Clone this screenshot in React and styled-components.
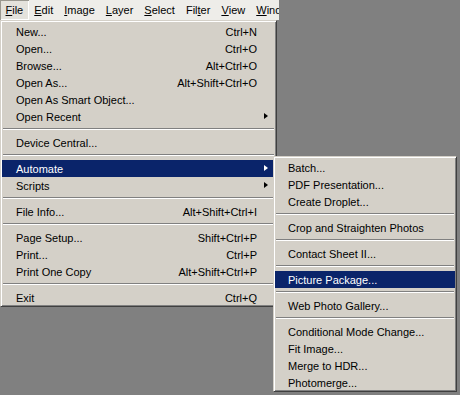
import React from 'react';
import styled, { createGlobalStyle, css } from 'styled-components';

const Global = createGlobalStyle`
  html, body { margin: 0; padding: 0; background: #808080; }
  body {
    width: 460px; height: 395px; overflow: hidden;
    font-family: "Liberation Sans", Arial, sans-serif;
    font-size: 11px; color: #000;
  }
`;

const Screen = styled.div`
  position: relative;
  width: 460px;
  height: 395px;
`;

const MenuBar = styled.div`
  display: flex;
  width: 279px;
  height: 20px;
  background: #eeede9;
  overflow: hidden;
  white-space: nowrap;
`;

const BarItem = styled.div`
  display: flex;
  align-items: center;
  padding: 0 5.5px;
  ${p => p.$open && css`
    background: #e4e2dc;
    box-shadow: inset 1px 1px #9a9890, inset -1px -1px #ffffff;
  `}
`;

const U = styled.span`
  text-decoration: underline;
  text-underline-offset: 1px;
`;

const Menu = styled.div`
  position: absolute;
  box-sizing: border-box;
  background: #d4d0c8;
  border: 1px solid;
  border-color: #d4d0c8 #404040 #404040 #d4d0c8;
  box-shadow: inset 1px 1px #ffffff, inset -1px -1px #808080;
  padding: 2px 1px 0 1px;
  color: #000;
  white-space: nowrap;
  ${p => p.$sub
    ? css`left: calc(100% - 2px); top: -4px; width: 184px;`
    : css`left: 0; top: 20px; width: 277px;`}
`;

const Row = styled.div`
  position: relative;
  box-sizing: border-box;
  display: flex;
  align-items: center;
  justify-content: space-between;
  height: 17px;
  padding: ${p => (p.$sub ? '1px 18px 0 13px' : '1px 18px 0 14px')};
  ${p => p.$active && css`
    background: #0a246a;
    color: #ffffff;
  `}
`;

const Shortcut = styled.span`
  margin-left: 20px;
`;

const Arrow = styled.span`
  position: absolute;
  right: 7px;
  top: 5px;
  width: 0;
  height: 0;
  border-left: 4px solid currentColor;
  border-top: 3.5px solid transparent;
  border-bottom: 3.5px solid transparent;
`;

const Sep = styled.div`
  height: 0;
  margin: 3px 1px 4px;
  border-top: 1px solid #808080;
  border-bottom: 1px solid #ffffff;
`;

const barItems = [
  { pre: '', u: 'F', post: 'ile', open: true },
  { pre: '', u: 'E', post: 'dit' },
  { pre: '', u: 'I', post: 'mage' },
  { pre: '', u: 'L', post: 'ayer' },
  { pre: '', u: 'S', post: 'elect' },
  { pre: 'Fil', u: 't', post: 'er' },
  { pre: '', u: 'V', post: 'iew' },
  { pre: '', u: 'W', post: 'ind' },
];

const subItems = [
  { label: 'Batch...' },
  { label: 'PDF Presentation...' },
  { label: 'Create Droplet...' },
  { sep: true },
  { label: 'Crop and Straighten Photos' },
  { sep: true },
  { label: 'Contact Sheet II...' },
  { sep: true },
  { label: 'Picture Package...', active: true },
  { sep: true },
  { label: 'Web Photo Gallery...' },
  { sep: true },
  { label: 'Conditional Mode Change...' },
  { label: 'Fit Image...' },
  { label: 'Merge to HDR...' },
  { label: 'Photomerge...' },
];

const fileItems = [
  { label: 'New...', key: 'Ctrl+N' },
  { label: 'Open...', key: 'Ctrl+O' },
  { label: 'Browse...', key: 'Alt+Ctrl+O' },
  { label: 'Open As...', key: 'Alt+Shift+Ctrl+O' },
  { label: 'Open As Smart Object...' },
  { label: 'Open Recent', arrow: true },
  { sep: true },
  { label: 'Device Central...' },
  { sep: true },
  { label: 'Automate', arrow: true, active: true, sub: subItems },
  { label: 'Scripts', arrow: true },
  { sep: true },
  { label: 'File Info...', key: 'Alt+Shift+Ctrl+I' },
  { sep: true },
  { label: 'Page Setup...', key: 'Shift+Ctrl+P' },
  { label: 'Print...', key: 'Ctrl+P' },
  { label: 'Print One Copy', key: 'Alt+Shift+Ctrl+P' },
  { sep: true },
  { label: 'Exit', key: 'Ctrl+Q' },
];

function MenuList({ items, sub }) {
  return (
    <Menu $sub={sub}>
      {items.map((it, i) =>
        it.sep ? (
          <Sep key={i} />
        ) : (
          <Row key={i} $active={it.active} $sub={sub}>
            <span>{it.label}</span>
            {it.key && <Shortcut>{it.key}</Shortcut>}
            {it.arrow && <Arrow />}
            {it.sub && <MenuList items={it.sub} sub />}
          </Row>
        )
      )}
    </Menu>
  );
}

export default function App() {
  return (
    <>
      <Global />
      <Screen>
        <MenuBar>
          {barItems.map((b, i) => (
            <BarItem key={i} $open={b.open}>
              {b.pre}<U>{b.u}</U>{b.post}
            </BarItem>
          ))}
        </MenuBar>
        <MenuList items={fileItems} />
      </Screen>
    </>
  );
}
